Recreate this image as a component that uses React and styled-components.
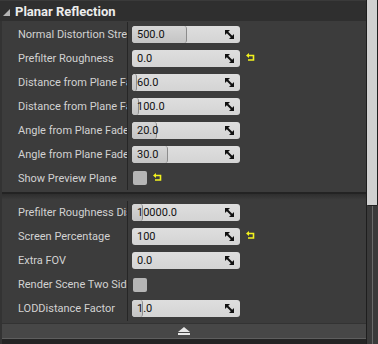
import React from "react";
import styled, { createGlobalStyle } from "styled-components";

const GlobalStyle = createGlobalStyle`
  html, body {
    margin: 0;
    padding: 0;
    background: #262626;
    font-family: Roboto, "Noto Sans", "Liberation Sans", sans-serif;
  }
`;

const firstGroup = [
  { label: "Normal Distortion Strength", kind: "num", value: "500.0", fill: 54 },
  { label: "Prefilter Roughness", kind: "num", value: "0.0", fill: 0, reset: true },
  { label: "Distance from Plane Fade Start", kind: "num", value: "60.0", fill: 4 },
  { label: "Distance from Plane Fade End", kind: "num", value: "100.0", fill: 6 },
  { label: "Angle from Plane Fade Start", kind: "num", value: "20.0", fill: 24 },
  { label: "Angle from Plane Fade End", kind: "num", value: "30.0", fill: 35 },
  { label: "Show Preview Plane", kind: "check", reset: true },
];

const secondGroup = [
  { label: "Prefilter Roughness Distance", kind: "num", value: "10000.0", fill: 10 },
  { label: "Screen Percentage", kind: "num", value: "100", fill: 0, reset: true },
  { label: "Extra FOV", kind: "num", value: "0.0", fill: 0 },
  { label: "Render Scene Two Sided", kind: "check" },
  { label: "LODDistance Factor", kind: "num", value: "1.0", fill: 10 },
];

function ResetIcon() {
  return (
    <svg width="9" height="8" viewBox="0 0 9 8">
      <path d="M0 2.5 L3 0 L3 5 Z" fill="#f2f21e" />
      <path d="M3 2.5 H7.5 V7 H2" fill="none" stroke="#f2f21e" strokeWidth="1.6" />
    </svg>
  );
}

function SpinIcon() {
  return (
    <svg width="9" height="9" viewBox="0 0 9 9">
      <path d="M0 0 H5 L0 5 Z" fill="#111" />
      <path d="M9 9 H4 L9 4 Z" fill="#111" />
      <path d="M1.5 1.5 L7.5 7.5" stroke="#111" strokeWidth="2" />
    </svg>
  );
}

function PropRow({ item }) {
  return (
    <Row>
      <Label>{item.label}</Label>
      <Value>
        {item.kind === "num" ? (
          <SpinBox>
            {item.fill > 0 && <Fill style={{ width: item.fill }} />}
            <SpinText>{item.value}</SpinText>
            <SpinGrip>
              <SpinIcon />
            </SpinGrip>
          </SpinBox>
        ) : (
          <CheckBox />
        )}
        {item.reset && (
          <Reset>
            <ResetIcon />
          </Reset>
        )}
      </Value>
    </Row>
  );
}

function App() {
  return (
    <>
      <GlobalStyle />
      <Frame>
        <Main>
          <Header>
            <Arrow />
            <Title>Planar Reflection</Title>
          </Header>
          <Group>
            {firstGroup.map((item) => (
              <PropRow key={item.label} item={item} />
            ))}
          </Group>
          <Separator />
          <Group>
            {secondGroup.map((item) => (
              <PropRow key={item.label} item={item} />
            ))}
          </Group>
          <BottomBar>
            <Eject>
              <EjectTri />
              <EjectBar />
            </Eject>
          </BottomBar>
          <Footer />
        </Main>
        <ScrollBar>
          <Thumb />
          <Track />
        </ScrollBar>
      </Frame>
    </>
  );
}

const Frame = styled.div`
  display: flex;
  width: 378px;
  height: 344px;
  overflow: hidden;
  background: #3c3c3c;
`;

const Main = styled.div`
  flex: 1;
  display: flex;
  flex-direction: column;
  border-left: 2px solid #333333;
  min-width: 0;
`;

const Header = styled.div`
  height: 22px;
  box-sizing: border-box;
  display: flex;
  align-items: center;
  gap: 5px;
  padding-left: 3px;
  margin-left: -2px;
  background: #2f2f2f;
  border-top: 1px solid #3a3a3a;
`;

const Arrow = styled.div`
  width: 0;
  height: 0;
  margin-top: 2px;
  border-left: 7px solid transparent;
  border-bottom: 7px solid #b4b4b4;
`;

const Title = styled.span`
  color: #ececec;
  font-size: 13px;
  font-weight: bold;
`;

const Group = styled.div`
  display: flex;
  flex-direction: column;
  padding-top: 1px;
  padding-bottom: 2px;
`;

const Row = styled.div`
  display: flex;
  height: 24px;
  align-items: stretch;
`;

const Label = styled.div`
  width: 109px;
  padding-left: 16px;
  border-right: 1px solid #262626;
  display: flex;
  align-items: center;
  color: #d2d2d2;
  font-size: 11px;
  white-space: nowrap;
  overflow: hidden;
`;

const Value = styled.div`
  flex: 1;
  display: flex;
  align-items: center;
  padding-left: 4px;
  gap: 6px;
`;

const SpinBox = styled.div`
  position: relative;
  width: 108px;
  height: 17px;
  border-radius: 3px;
  background: linear-gradient(#dedede, #d4d4d4);
  display: flex;
  align-items: center;
  overflow: hidden;
`;

const Fill = styled.div`
  position: absolute;
  left: 0;
  top: 0;
  bottom: 0;
  background: linear-gradient(#d6d6d6, #c4c4c4);
  border-right: 1px solid #8c8c8c;
  border-radius: 3px;
`;

const SpinText = styled.span`
  position: relative;
  padding-left: 5px;
  flex: 1;
  color: #111111;
  font-size: 11px;
`;

const SpinGrip = styled.span`
  position: relative;
  display: flex;
  padding-right: 6px;
`;

const CheckBox = styled.div`
  width: 14px;
  height: 14px;
  margin-left: 1px;
  border-radius: 2px;
  background: #b5b5b5;
`;

const Reset = styled.span`
  display: flex;
  margin-top: -3px;
`;

const Separator = styled.div`
  height: 6px;
  border-top: 2px solid #232323;
  background: linear-gradient(#2e2e2e, #3c3c3c);
`;

const BottomBar = styled.div`
  margin-top: auto;
  height: 15px;
  background: #474747;
  border-top: 1px solid #333333;
  border-bottom: 1px solid #5e5e5e;
  display: flex;
  justify-content: center;
  align-items: center;
`;

const Eject = styled.div`
  display: flex;
  flex-direction: column;
  align-items: center;
  gap: 1px;
`;

const EjectTri = styled.div`
  width: 0;
  height: 0;
  border-left: 6px solid transparent;
  border-right: 6px solid transparent;
  border-bottom: 5px solid #e6e6e6;
`;

const EjectBar = styled.div`
  width: 12px;
  height: 2px;
  background: #e6e6e6;
`;

const Footer = styled.div`
  height: 5px;
  background: #242424;
`;

const ScrollBar = styled.div`
  width: 12px;
  display: flex;
  flex-direction: column;
  border-left: 1px solid #1e1e1e;
  box-sizing: border-box;
  background: #3a3a3a;
`;

const Thumb = styled.div`
  height: 205px;
  background: #d0d0d0;
  border-right: 1px solid #1e1e1e;
  border-bottom: 1px solid #222222;
  border-radius: 0 0 1px 1px;
`;

const Track = styled.div`
  flex: 1;
  margin-left: 5px;
  width: 1px;
  background: #6a6a6a;
`;

export default App;
